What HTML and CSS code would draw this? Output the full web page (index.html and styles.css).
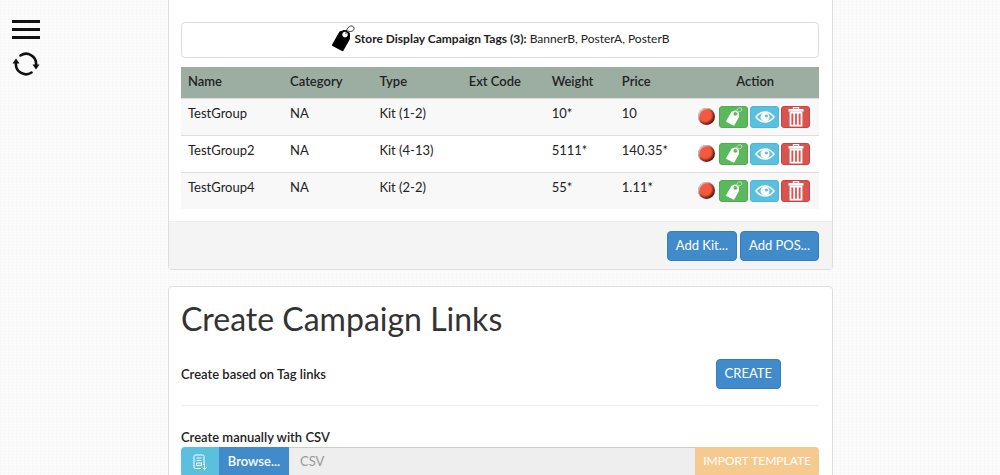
FILE: index.html
```html
<!DOCTYPE html>
<html lang="en">
<head>
  <meta charset="UTF-8">
  <meta name="viewport" content="width=device-width, initial-scale=1.0">
  <title>Store Display Campaign</title>
  <link rel="stylesheet" href="styles.css">
</head>
<body>
  <svg class="symbols" aria-hidden="true">
    <symbol id="icon-tag" viewBox="0 0 24 28">
      <path fill="currentColor" fill-rule="evenodd" d="M8.500 6.500L13 5q1-.3 2 .3l3 2q1 .7 1 1.700L19 14 12.500 25.500q-.6 1-1.500.5L1.500 21q-1-.6-.4-1.500zM14 6.800a2.800 2.800 0 1 0 .1 0z"/>
      <path fill="none" stroke="currentColor" stroke-width=".8" d="M15 9c0-3 1-6 3.500-7.500S24 2 22.800 4.500 18 7 16.500 5.500"/>
    </symbol>
    <symbol id="icon-eye" viewBox="0 0 20 14">
      <path fill="none" stroke="currentColor" stroke-width="1.600" d="M1 7q4-5 9-5t9 5q-4 5-9 5T1 7z"/>
      <path fill="currentColor" fill-rule="evenodd" d="M10 2.500a4.500 4.500 0 1 0 .1 0zM11.500 4.500a1.500 1.500 0 1 1-.1 0z"/>
    </symbol>
    <symbol id="icon-trash" viewBox="0 0 16 20">
      <path fill="none" stroke="currentColor" stroke-width="1.300" d="M5.500 2V.7h5V2"/>
      <path fill="currentColor" d="M1 2h14q.6 0 .6 1v1.500H.4V3q0-1 .6-1z"/>
      <path fill="none" stroke="currentColor" stroke-width="1.800" d="M2.500 5.500h11v13.200h-11zM6.200 6v12M9.800 6v12"/>
    </symbol>
  </svg>

  <div class="layout">
    <nav class="sidebar">
      <button class="icon-btn" aria-label="Menu">
        <svg width="28" height="20" viewBox="0 0 28 20"><path stroke="#111" stroke-width="3" d="M0 1.500h28M0 9.500h28M0 17.500h28"/></svg>
      </button>
      <button class="icon-btn" aria-label="Refresh">
        <svg width="28" height="24" viewBox="0 0 28 24">
          <g fill="none" stroke="#111" stroke-width="2.600" stroke-linecap="round">
            <path d="M8.500 3.500A10 10 0 0 1 24 13"/>
            <path d="M19.500 20.500A10 10 0 0 1 4 11"/>
          </g>
          <path fill="#111" d="M20.500 12.500h7L24 17.500zM.5 11.500h7L4 6.500z"/>
        </svg>
      </button>
    </nav>

    <main class="content">
      <section class="panel">
        <div class="panel-body">
          <button class="tag-bar">
            <svg class="tag-icon"><use href="#icon-tag"/></svg>
            <span><b>Store Display Campaign Tags (3):</b> BannerB, PosterA, PosterB</span>
          </button>

          <table class="items">
            <thead>
              <tr>
                <th class="col-name">Name</th>
                <th class="col-category">Category</th>
                <th class="col-type">Type</th>
                <th class="col-code">Ext Code</th>
                <th class="col-weight">Weight</th>
                <th class="col-price">Price</th>
                <th class="col-action">Action</th>
              </tr>
            </thead>
            <tbody>
              <tr>
                <td>TestGroup</td>
                <td>NA</td>
                <td>Kit (1-2)</td>
                <td></td>
                <td>10*</td>
                <td>10</td>
                <td>
                  <div class="actions">
                    <span class="status"></span>
                    <button class="action green" aria-label="Tags"><svg class="i-tag"><use href="#icon-tag"/></svg></button>
                    <button class="action cyan" aria-label="View"><svg class="i-eye"><use href="#icon-eye"/></svg></button>
                    <button class="action red" aria-label="Delete"><svg class="i-trash"><use href="#icon-trash"/></svg></button>
                  </div>
                </td>
              </tr>
              <tr>
                <td>TestGroup2</td>
                <td>NA</td>
                <td>Kit (4-13)</td>
                <td></td>
                <td>5111*</td>
                <td>140.35*</td>
                <td>
                  <div class="actions">
                    <span class="status"></span>
                    <button class="action green" aria-label="Tags"><svg class="i-tag"><use href="#icon-tag"/></svg></button>
                    <button class="action cyan" aria-label="View"><svg class="i-eye"><use href="#icon-eye"/></svg></button>
                    <button class="action red" aria-label="Delete"><svg class="i-trash"><use href="#icon-trash"/></svg></button>
                  </div>
                </td>
              </tr>
              <tr>
                <td>TestGroup4</td>
                <td>NA</td>
                <td>Kit (2-2)</td>
                <td></td>
                <td>55*</td>
                <td>1.11*</td>
                <td>
                  <div class="actions">
                    <span class="status"></span>
                    <button class="action green" aria-label="Tags"><svg class="i-tag"><use href="#icon-tag"/></svg></button>
                    <button class="action cyan" aria-label="View"><svg class="i-eye"><use href="#icon-eye"/></svg></button>
                    <button class="action red" aria-label="Delete"><svg class="i-trash"><use href="#icon-trash"/></svg></button>
                  </div>
                </td>
              </tr>
            </tbody>
          </table>
        </div>
        <div class="panel-footer">
          <button class="btn">Add Kit...</button>
          <button class="btn">Add POS...</button>
        </div>
      </section>

      <section class="panel links">
        <h1>Create Campaign Links</h1>
        <div class="link-row">
          <b>Create based on Tag links</b>
          <button class="btn">CREATE</button>
        </div>
        <hr>
        <label class="csv-label" for="csv">Create manually with CSV</label>
        <div class="input-group">
          <button class="download" aria-label="Download template">
            <svg width="16" height="17" viewBox="0 0 16 17" fill="none" stroke="#fff">
              <path d="M9 14.500H3.500q-1.500 0-1.500-1.500V2.500Q2 1 3.500 1h7Q12 1 12 2.500V11M4.500 4h5M4.500 6.500h5M4.500 9h5v2.500h-5zM12.500 10.500v5M10.500 13.500l2 2 2-2"/>
            </svg>
          </button>
          <button class="browse">Browse...</button>
          <input type="text" id="csv" placeholder="CSV" readonly>
          <button class="import" disabled>IMPORT TEMPLATE</button>
        </div>
      </section>
    </main>
  </div>
</body>
</html>
```
FILE: styles.css
```css
* {
  box-sizing: border-box;
}
body {
  margin: 0;
  font-family: Lato, "Open Sans", sans-serif;
  font-size: 13px;
  line-height: 18px;
  color: #222;
  background-color: #fbfbfb;
  background-image:
    repeating-linear-gradient(0deg, rgba(0, 0, 0, 0.006) 0 1px, transparent 1px 3px),
    repeating-linear-gradient(90deg, rgba(0, 0, 0, 0.006) 0 1px, transparent 1px 4px);
}
button, input {
  font: inherit;
  margin: 0;
}
button {
  cursor: pointer;
}
b, th, .csv-label {
  font-weight: 600;
}
.symbols {
  display: none;
}
.layout {
  display: flex;
  padding-right: 167px;
}
.sidebar {
  flex: 0 0 168px;
  display: flex;
  flex-direction: column;
  align-items: flex-start;
  gap: 12px;
  padding: 20px 12px;
}
.icon-btn {
  display: flex;
  padding: 0;
  border: 0;
  background: none;
}
.content {
  flex: 1;
  min-width: 0;
}
.panel {
  margin-bottom: 16px;
  background: #fff;
  border: 1px solid #ddd;
  border-radius: 4px;
}
.panel:first-child {
  border-top: 0;
  border-radius: 0 0 4px 4px;
}
.panel-body {
  padding: 22px 13px 12px 12px;
}
.tag-bar {
  display: flex;
  align-items: center;
  justify-content: center;
  width: 100%;
  height: 36px;
  margin-bottom: 9px;
  padding: 0 0 2px;
  font-size: 12px;
  color: #222;
  background: #fff;
  border: 1px solid #ddd;
  border-radius: 4px;
}
.tag-bar b {
  font-weight: 700;
}
.tag-icon {
  width: 24px;
  height: 28px;
  color: #000;
}

/* items table */
.items {
  width: 100%;
  table-layout: fixed;
  border-collapse: collapse;
}
.items th {
  height: 31px;
  padding: 0 7px 2px;
  text-align: left;
  background: #9caea2;
}
.items td {
  height: 37px;
  padding: 5px 7px 0;
  vertical-align: top;
  border-top: 1px solid #ddd;
}
.items tbody tr:nth-child(odd) {
  background: #f8f8f8;
}
.col-name { width: 16%; }
.col-category { width: 14%; }
.col-type { width: 14%; }
.col-code { width: 13%; }
.col-weight { width: 11%; }
.col-price { width: 12%; }
.items .col-action {
  width: 20%;
  text-align: center;
}
.actions {
  display: flex;
  align-items: center;
  justify-content: flex-end;
  gap: 2px;
  padding: 2px 2px 0 0;
}
.status {
  width: 17px;
  height: 17px;
  margin-right: 2px;
  border-radius: 50%;
  background: radial-gradient(circle at 42% 42%, #f4593f 42%, #4a1009 72%);
  box-shadow: inset 1px 1px 1px #ccc;
}
.action {
  display: flex;
  align-items: center;
  justify-content: center;
  width: 29px;
  height: 22px;
  padding: 0;
  color: #fff;
  border: 1px solid;
  border-radius: 3px;
}
.green { background: #5cb85c; border-color: #4cae4c; }
.cyan { background: #5bc0de; border-color: #46b8da; }
.red { background: #d9534f; border-color: #d43f3a; }
.i-tag { width: 18px; height: 20px; }
.i-eye { width: 20px; height: 14px; }
.i-trash { width: 16px; height: 20px; }

.panel-footer {
  display: flex;
  justify-content: flex-end;
  gap: 3px;
  padding: 9px 13px 8px 12px;
  background: #f4f4f4;
  border-top: 1px solid #eee;
}
.btn {
  height: 30px;
  padding: 0 8px 2px;
  color: #fff;
  background: #428bca;
  border: 1px solid #357ebd;
  border-radius: 4px;
}

/* campaign links */
.links {
  padding: 0 13px 12px 12px;
}
.links h1 {
  margin: 12px 0 20px;
  font-size: 32px;
  line-height: 40px;
  font-weight: 400;
  color: #333;
}
.link-row {
  display: flex;
  align-items: center;
  justify-content: space-between;
  padding-right: 38px;
}
.links hr {
  margin: 16px 0 22px;
  border: 0;
  border-top: 1px solid #eee;
}
.csv-label {
  display: block;
  margin-bottom: 1px;
}
.input-group {
  display: flex;
  height: 30px;
}
.input-group button {
  border: 0;
  color: #fff;
}
.download {
  display: flex;
  align-items: center;
  justify-content: center;
  width: 38px;
  background: #5bc0de;
  border-radius: 4px 0 0 4px;
}
.input-group .browse {
  width: 70px;
  padding: 0 0 2px;
  font-weight: 600;
  background: #428bca;
}
.input-group input {
  flex: 1;
  min-width: 0;
  padding: 0 11px 2px;
  background: #eee;
  border: 1px solid #ccc;
  border-width: 1px 0;
}
.input-group input::placeholder {
  color: #999;
}
.import {
  padding: 0 8px 2px;
  font-size: 12px;
  background: #f6ca8f;
  border-radius: 0 4px 4px 0;
}
```
